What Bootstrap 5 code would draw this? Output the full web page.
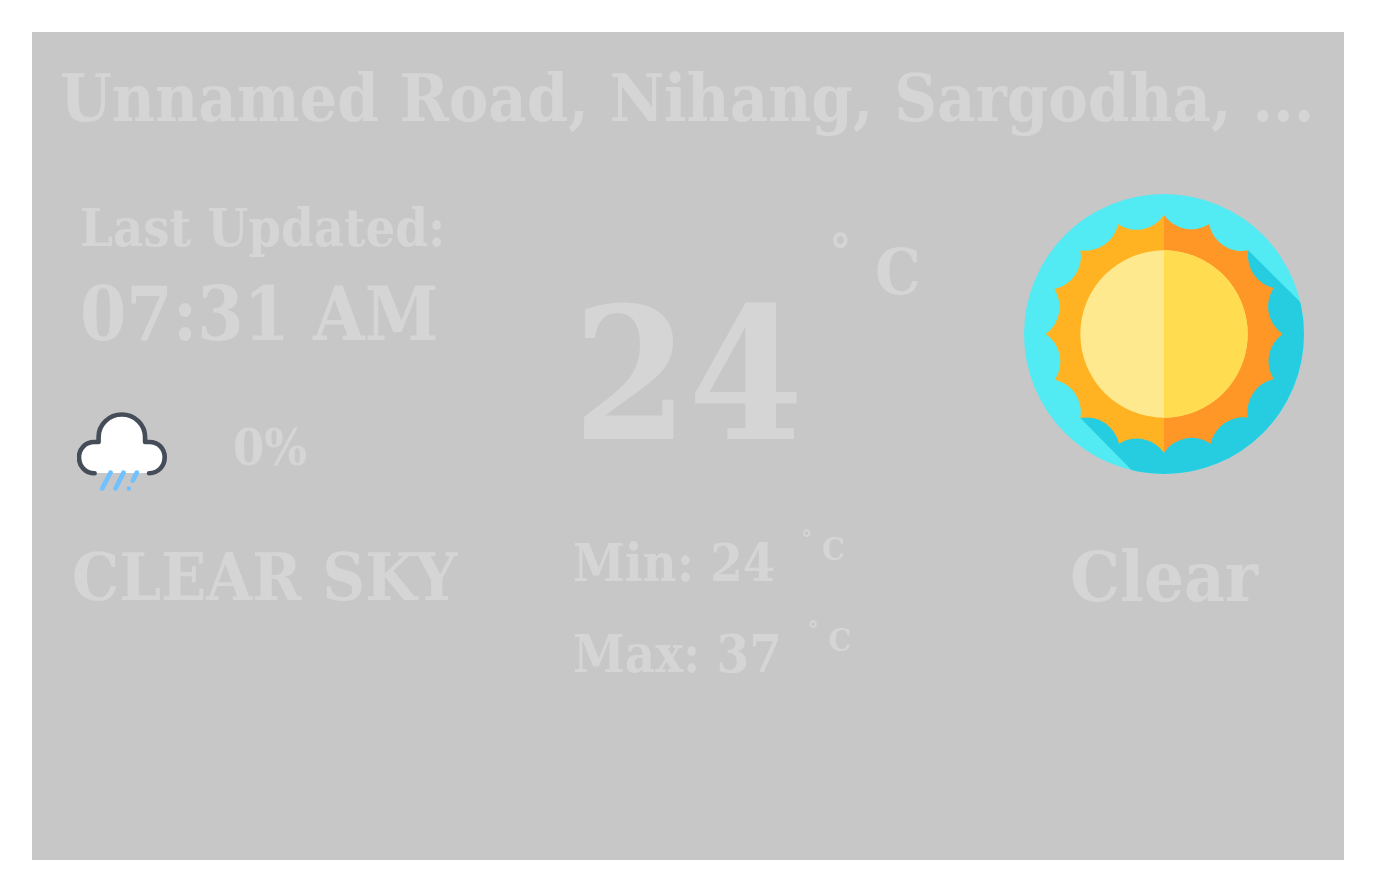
<!DOCTYPE html>
<html lang="en">
<head>
<meta charset="utf-8">
<meta name="viewport" content="width=device-width, initial-scale=1">
<title>Weather</title>
<link href="https://cdn.jsdelivr.net/npm/bootstrap@5.3.0/dist/css/bootstrap.min.css" rel="stylesheet">
<style>
body { font-family: "DejaVu Serif Condensed", "DejaVu Serif", serif; font-weight: 700; background: #fff; padding: 32px; }
.weather { background: #c7c7c7; color: #d5d5d5; min-height: calc(100vh - 64px); padding: 24px 40px; }
.place { font-size: 66px; line-height: 84px; font-weight: 700; margin: 0 -12px 54px; white-space: nowrap; }
.board { display: grid; grid-template-columns: 10fr 9fr 280px; row-gap: 46px; }
.updated { font-size: 52px; line-height: 68px; padding-left: 8px; }
.clock { font-size: 74px; line-height: 104px; padding-left: 8px; }
.rain { margin-top: 46px; gap: 66px; padding-left: 5px; }
.chance { font-size: 50px; line-height: 64px; }
.now { padding-top: 32px; }
.degrees { font-size: 184px; line-height: 160px; margin-top: 68px; }
.unit { gap: 24px; font-size: 48px; line-height: 52px; padding-left: 26px; }
.unit-c { font-size: 64px; line-height: 64px; margin-top: 14px; }
.sky { font-size: 66px; line-height: 80px; }
.range { font-size: 52px; line-height: 52px; gap: 39px; }
.range .unit { font-size: 24px; line-height: 28px; margin-top: -12px; gap: 10px; padding-left: 26px; }
.range .unit-c { font-size: 32px; line-height: 36px; margin-top: 6px; }
.summary { font-size: 70px; line-height: 80px; }
</style>
</head>
<body>
<main class="weather">
  <h1 class="place">Unnamed Road, Nihang, Sargodha, ...</h1>
  <div class="board">
    <section>
      <div class="updated">Last Updated:</div>
      <div class="clock">07:31 AM</div>
      <div class="rain d-flex align-items-center">
        <svg width="90" height="79" viewBox="45 37 271 237" fill="none" stroke-linecap="round" role="img" aria-label="Chance of rain">
          <path fill="#fff" d="M97 220C70 220 51 200 51 173s20-46 46-46h13V112a70 68 0 0 1 140 0v15h13c27 0 46 20 46 46s-19 47-46 47z"/>
          <path stroke="#454d58" stroke-width="14" stroke-linejoin="round" d="M98 221C70 221 51 200 51 173s20-46 46-46h13V112a70 68 0 0 1 140 0v15h13c27 0 46 20 46 46s-19 48-47 48"/>
          <path stroke="#70c1ff" stroke-width="14" d="M146 219l-25 48M185 219l-24 48M225 219l-12 24M201 267h.1"/>
        </svg>
        <span class="chance mb-2">0%</span>
      </div>
    </section>
    <section class="now d-flex align-items-start">
      <span class="degrees">24</span>
      <span class="unit d-flex"><span>°</span><span class="unit-c">C</span></span>
    </section>
    <svg width="280" height="280" viewBox="30 30 840 840" role="img" aria-label="Clear sky">
      <defs><clipPath id="disc"><circle cx="450" cy="450" r="420"/></clipPath></defs>
      <circle cx="450" cy="450" r="420" fill="#52ebf3"/>
      <path clip-path="url(#disc)" fill="#26cde1" d="M703 199L900 395V900H394L199 702z"/>
      <path fill="#ffb323" d="M450 93A100 100 0 0 1 312 121A100 100 0 0 1 199 199A100 100 0 0 1 121 315A100 100 0 0 1 95 450A100 100 0 0 1 123 587A100 100 0 0 1 199 702A100 100 0 0 1 315 779A100 100 0 0 1 450 806z"/>
      <path fill="#ff9727" d="M450 93A100 100 0 0 0 585 121A100 100 0 0 0 703 199A100 100 0 0 0 779 312A100 100 0 0 0 806 450A100 100 0 0 0 779 585A100 100 0 0 0 702 701A100 100 0 0 0 590 779A100 100 0 0 0 450 806z"/>
      <circle cx="450" cy="450" r="251" fill="#ffe98f"/>
      <path fill="#ffdc50" d="M450 199a251 251 0 0 1 0 502z"/>
    </svg>
    <div class="sky">CLEAR SKY</div>
    <div class="range d-flex flex-column">
      <div class="d-flex align-items-start"><span>Min: 24</span><span class="unit d-flex"><span>°</span><span class="unit-c">C</span></span></div>
      <div class="d-flex align-items-start"><span>Max: 37</span><span class="unit d-flex"><span>°</span><span class="unit-c">C</span></span></div>
    </div>
    <div class="summary text-center">Clear</div>
  </div>
</main>
<script src="https://cdn.jsdelivr.net/npm/bootstrap@5.3.0/dist/js/bootstrap.bundle.min.js"></script>
</body>
</html>
